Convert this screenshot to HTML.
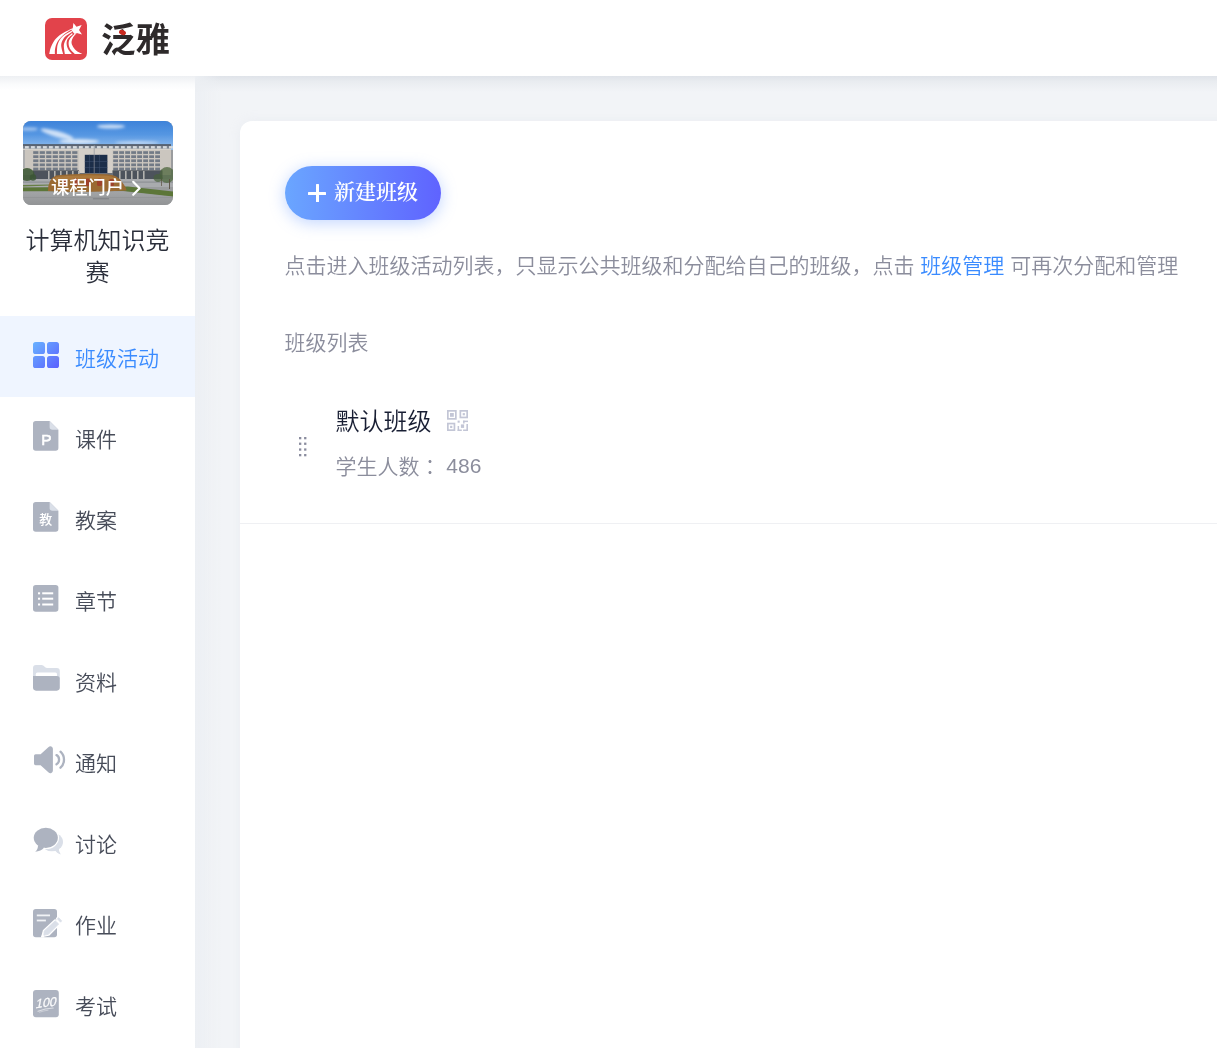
<!DOCTYPE html>
<html lang="zh-CN">
<head>
<meta charset="utf-8">
<title>泛雅 - 班级活动</title>
<style>
html,body{margin:0;padding:0;}
body{width:1217px;height:1048px;overflow:hidden;position:relative;background:#f2f4f7;
  font-family:"Liberation Sans","Noto Sans CJK SC",sans-serif;color:#474c59;font-weight:350;}
.abs{position:absolute;}
#main-shadow{left:195px;top:76px;width:1022px;height:16px;background:linear-gradient(#dfe3e9,#e9ecf0 35%,#f2f4f7);}
#header{left:0;top:0;width:1217px;height:76px;background:#fff;}
#sidebar{left:0;top:76px;width:195px;height:972px;background:#fff;}
#side-shadow{left:0;top:76px;width:195px;height:14px;background:linear-gradient(#eef0f3,#fafbfc 60%,#fff);}
#logo-box{left:45px;top:18px;width:42px;height:42px;border-radius:7px;background:#e2434b;overflow:hidden;}
#logo-text{left:101px;top:15px;font-size:34.5px;line-height:50px;font-weight:700;color:#2e2a2b;letter-spacing:0px;white-space:nowrap;
  font-family:"Liberation Sans","Noto Sans CJK SC",sans-serif;}
#thumb{left:23px;top:121px;width:150px;height:84px;border-radius:8px;overflow:hidden;}
#thumb-text{left:23px;top:175px;width:150px;height:26px;line-height:26px;font-size:18.3px;font-weight:500;color:#fff;white-space:nowrap;}
#course-title{left:22.5px;top:225px;width:150px;text-align:center;font-size:24px;line-height:31.5px;color:#2b2f3b;}
.item{left:0;width:195px;height:81px;}
.item.on{background:#eff5ff;}
.item .ico{position:absolute;left:33px;top:25px;width:26px;height:26px;}
.item .txt{position:absolute;left:75px;top:28px;font-size:21px;line-height:30px;white-space:nowrap;color:#474c59;}
.item.on .txt{color:#3a8bff;}
#panel{left:240px;top:121px;width:1000px;height:940px;background:#fff;border-radius:12px 0 0 0;box-shadow:0 0 12px rgba(200,206,220,0.16);}
#newbtn{left:285px;top:166px;width:156px;height:54px;border-radius:27px;background:linear-gradient(90deg,#6aa6ff,#5f63ff);
  box-shadow:0 3px 16px rgba(100,150,255,0.4);}
#newbtn-txt{left:334px;top:177px;font-size:21px;line-height:30px;color:#fff;white-space:nowrap;
  font-family:"Liberation Serif","Noto Serif CJK SC",serif;font-weight:600;}
#desc{left:284.5px;top:251px;font-size:21px;line-height:30px;color:#8b8d9c;white-space:nowrap;}
#desc a{color:#3a8bff;text-decoration:none;}
#listtitle{left:284.5px;top:328px;font-size:21px;line-height:30px;color:#8b8d9c;white-space:nowrap;}
#cname{left:335.5px;top:405px;font-size:24px;line-height:34px;color:#181e33;white-space:nowrap;}
#ccount{left:335.5px;top:452px;font-size:21px;line-height:30px;color:#8b8d9c;white-space:nowrap;}
#divider{left:240px;top:522.5px;width:977px;height:1.5px;background:#eff0f3;}
</style>
</head>
<body>
<div id="root" style="position:absolute;left:0;top:0;width:1217px;height:1048px;overflow:hidden;will-change:transform;">
<div class="abs" id="main-shadow"></div>
<div class="abs" id="left-shadow" style="left:195px;top:76px;width:26px;height:972px;background:linear-gradient(90deg,#eceff3,rgba(242,244,247,0));"></div>
<div class="abs" id="panel"></div>
<div class="abs" id="sidebar"></div>
<div class="abs" id="side-shadow"></div>
<div class="abs" id="header"></div>

<!-- LOGO -->
<div class="abs" id="logo-box"><svg width="42" height="42" viewBox="0 0 42 42" style="display:block"><g fill="#fff"><path d="M4.2 36 C4.5 35.0 4.8 32.2 5.7 29.8 C6.7 27.4 8.1 24.1 9.9 21.8 C11.7 19.5 13.9 17.6 16.4 15.9 C18.9 14.2 22.9 12.4 24.8 11.4 C26.7 10.4 27.5 10.2 28.0 9.9 L27.2 11.6 C26.7 11.8 25.7 12.0 24.0 13.1 C22.3 14.2 19.0 16.4 17.0 18.3 C15.0 20.2 13.3 22.2 12.2 24.3 C11.0 26.4 10.5 28.9 10.1 30.8 C9.7 32.8 9.9 35.1 9.9 36.0 Z"/><path d="M11.9 36 C12.0 34.5 11.9 29.8 12.5 27.3 C13.1 24.8 14.2 22.7 15.5 20.8 C16.8 18.9 18.6 17.5 20.5 16.2 C22.4 14.9 25.8 13.4 26.8 12.8 L27.0 13.9 C25.9 14.7 22.0 16.8 20.3 18.4 C18.6 20.0 17.6 22.1 16.9 23.8 C16.2 25.5 16.1 26.8 16.3 28.8 C16.5 30.8 17.8 34.8 18.1 36.0 Z"/><path d="M19.85 36 C19.7 34.9 19.0 31.2 18.9 29.3 C18.8 27.4 18.8 26.4 19.4 24.8 C19.9 23.2 20.9 21.3 22.2 19.7 C23.5 18.1 26.4 15.9 27.3 15.1 L27.5 16.4 C26.7 17.1 23.8 19.2 22.8 20.8 C21.8 22.4 21.6 24.1 21.6 25.8 C21.6 27.5 22.0 29.1 22.9 30.8 C23.8 32.5 26.1 35.1 26.8 36.0 Z"/><path d="M29.8 36 C29.0 35.1 26.0 32.6 25.0 30.8 C24.0 29.0 23.6 27.0 23.6 25.3 C23.6 23.6 24.1 22.1 25.1 20.5 C26.1 18.9 29.0 16.6 29.8 15.8 L31.8 14.9 C31.2 15.6 29.2 17.5 28.3 18.9 C27.4 20.3 26.8 21.9 26.6 23.3 C26.4 24.7 26.6 25.8 27.3 27.3 C28.0 28.8 29.1 30.8 30.8 32.3 C32.5 33.8 36.1 35.4 37.2 36.0 Z"/><path d="M28.4 5 L31.5 8.7 L36.7 6.9 L34 11.9 L37 16.4 L31.8 14.9 L29.6 16 L26.6 12.6 L27.8 9.9 Z"/></g></svg></div>
<div class="abs" id="logo-text">泛雅</div>
<div class="abs" style="left:118.6px;top:29.6px;width:7px;height:5px;background:#c9291f;border-radius:60% 50% 60% 40%;transform:rotate(28deg);"></div>

<!-- THUMB -->
<div class="abs" id="thumb"><svg width="150" height="84" viewBox="0 0 150 84" style="display:block">
<defs>
<linearGradient id="sky" x1="0" y1="0" x2="0" y2="1"><stop offset="0" stop-color="#3a80d8"/><stop offset="0.5" stop-color="#5596e2"/><stop offset="1" stop-color="#97c1ee"/></linearGradient>
<linearGradient id="gnd" x1="0" y1="0" x2="0" y2="1"><stop offset="0" stop-color="#a3a5a7"/><stop offset="1" stop-color="#8f9193"/></linearGradient>
<filter id="b1" x="-10%" y="-10%" width="120%" height="120%"><feGaussianBlur stdDeviation="0.5"/></filter>
<filter id="b3" x="-30%" y="-80%" width="160%" height="260%"><feGaussianBlur stdDeviation="1.5"/></filter>
</defs>
<rect width="150" height="84" fill="#9a9c9e"/>
<g filter="url(#b1)">
<rect x="-2" y="-2" width="154" height="31" fill="url(#sky)"/>
<g filter="url(#b3)" fill="#eef4fc">
<ellipse cx="88" cy="5.5" rx="14" ry="2" opacity="0.8"/>
<ellipse cx="34" cy="13" rx="17" ry="3" opacity="0.8" transform="rotate(16 34 13)"/>
<ellipse cx="56" cy="20.5" rx="20" ry="2.2" opacity="0.85"/>
<ellipse cx="6" cy="8" rx="9" ry="1.6" opacity="0.6"/>
<ellipse cx="114" cy="21.8" rx="22" ry="1.5" opacity="0.7"/>
</g>
<rect x="0" y="24" width="148" height="30" fill="#cbc6bf"/>
<rect x="0" y="23.2" width="148" height="1.7" fill="#4d5562"/>
<rect x="0" y="24.9" width="148" height="3" fill="#7a838f"/>
<rect x="2" y="25.1" width="3.8" height="2.4" fill="#d5dade"/>
<rect x="8" y="25.1" width="3.8" height="2.4" fill="#d5dade"/>
<rect x="14" y="25.1" width="3.8" height="2.4" fill="#d5dade"/>
<rect x="20" y="25.1" width="3.8" height="2.4" fill="#d5dade"/>
<rect x="26" y="25.1" width="3.8" height="2.4" fill="#d5dade"/>
<rect x="32" y="25.1" width="3.8" height="2.4" fill="#d5dade"/>
<rect x="38" y="25.1" width="3.8" height="2.4" fill="#d5dade"/>
<rect x="44" y="25.1" width="3.8" height="2.4" fill="#d5dade"/>
<rect x="50" y="25.1" width="3.8" height="2.4" fill="#d5dade"/>
<rect x="56" y="25.1" width="3.8" height="2.4" fill="#d5dade"/>
<rect x="62" y="25.1" width="3.8" height="2.4" fill="#d5dade"/>
<rect x="68" y="25.1" width="3.8" height="2.4" fill="#d5dade"/>
<rect x="74" y="25.1" width="3.8" height="2.4" fill="#d5dade"/>
<rect x="80" y="25.1" width="3.8" height="2.4" fill="#d5dade"/>
<rect x="86" y="25.1" width="3.8" height="2.4" fill="#d5dade"/>
<rect x="92" y="25.1" width="3.8" height="2.4" fill="#d5dade"/>
<rect x="98" y="25.1" width="3.8" height="2.4" fill="#d5dade"/>
<rect x="104" y="25.1" width="3.8" height="2.4" fill="#d5dade"/>
<rect x="110" y="25.1" width="3.8" height="2.4" fill="#d5dade"/>
<rect x="116" y="25.1" width="3.8" height="2.4" fill="#d5dade"/>
<rect x="122" y="25.1" width="3.8" height="2.4" fill="#d5dade"/>
<rect x="128" y="25.1" width="3.8" height="2.4" fill="#d5dade"/>
<rect x="134" y="25.1" width="3.8" height="2.4" fill="#d5dade"/>
<rect x="140" y="25.1" width="3.8" height="2.4" fill="#d5dade"/>
<rect x="146" y="25.1" width="3.8" height="2.4" fill="#d5dade"/>
<rect x="0" y="27.7" width="148" height="0.8" fill="#e2ded8"/>
<rect x="10.2" y="30.2" width="5.2" height="2.7" fill="#727a86"/>
<rect x="16.7" y="30.2" width="5.2" height="2.7" fill="#727a86"/>
<rect x="23.2" y="30.2" width="5.2" height="2.7" fill="#727a86"/>
<rect x="29.7" y="30.2" width="5.2" height="2.7" fill="#727a86"/>
<rect x="36.2" y="30.2" width="5.2" height="2.7" fill="#727a86"/>
<rect x="42.7" y="30.2" width="5.2" height="2.7" fill="#727a86"/>
<rect x="49.2" y="30.2" width="5.2" height="2.7" fill="#727a86"/>
<rect x="10.2" y="34.3" width="5.2" height="2.7" fill="#727a86"/>
<rect x="16.7" y="34.3" width="5.2" height="2.7" fill="#727a86"/>
<rect x="23.2" y="34.3" width="5.2" height="2.7" fill="#727a86"/>
<rect x="29.7" y="34.3" width="5.2" height="2.7" fill="#727a86"/>
<rect x="36.2" y="34.3" width="5.2" height="2.7" fill="#727a86"/>
<rect x="42.7" y="34.3" width="5.2" height="2.7" fill="#727a86"/>
<rect x="49.2" y="34.3" width="5.2" height="2.7" fill="#727a86"/>
<rect x="10.2" y="38.4" width="5.2" height="2.7" fill="#727a86"/>
<rect x="16.7" y="38.4" width="5.2" height="2.7" fill="#727a86"/>
<rect x="23.2" y="38.4" width="5.2" height="2.7" fill="#727a86"/>
<rect x="29.7" y="38.4" width="5.2" height="2.7" fill="#727a86"/>
<rect x="36.2" y="38.4" width="5.2" height="2.7" fill="#727a86"/>
<rect x="42.7" y="38.4" width="5.2" height="2.7" fill="#727a86"/>
<rect x="49.2" y="38.4" width="5.2" height="2.7" fill="#727a86"/>
<rect x="10.2" y="42.5" width="5.2" height="2.7" fill="#727a86"/>
<rect x="16.7" y="42.5" width="5.2" height="2.7" fill="#727a86"/>
<rect x="23.2" y="42.5" width="5.2" height="2.7" fill="#727a86"/>
<rect x="29.7" y="42.5" width="5.2" height="2.7" fill="#727a86"/>
<rect x="36.2" y="42.5" width="5.2" height="2.7" fill="#727a86"/>
<rect x="42.7" y="42.5" width="5.2" height="2.7" fill="#727a86"/>
<rect x="49.2" y="42.5" width="5.2" height="2.7" fill="#727a86"/>
<rect x="10.2" y="46.6" width="5.2" height="2.7" fill="#727a86"/>
<rect x="16.7" y="46.6" width="5.2" height="2.7" fill="#727a86"/>
<rect x="23.2" y="46.6" width="5.2" height="2.7" fill="#727a86"/>
<rect x="29.7" y="46.6" width="5.2" height="2.7" fill="#727a86"/>
<rect x="36.2" y="46.6" width="5.2" height="2.7" fill="#727a86"/>
<rect x="42.7" y="46.6" width="5.2" height="2.7" fill="#727a86"/>
<rect x="49.2" y="46.6" width="5.2" height="2.7" fill="#727a86"/>
<rect x="90.2" y="30.2" width="4.8" height="2.7" fill="#727a86"/>
<rect x="96.2" y="30.2" width="4.8" height="2.7" fill="#727a86"/>
<rect x="102.2" y="30.2" width="4.8" height="2.7" fill="#727a86"/>
<rect x="108.2" y="30.2" width="4.8" height="2.7" fill="#727a86"/>
<rect x="114.2" y="30.2" width="4.8" height="2.7" fill="#727a86"/>
<rect x="120.2" y="30.2" width="4.8" height="2.7" fill="#727a86"/>
<rect x="126.2" y="30.2" width="4.8" height="2.7" fill="#727a86"/>
<rect x="132.2" y="30.2" width="4.8" height="2.7" fill="#727a86"/>
<rect x="90.2" y="34.3" width="4.8" height="2.7" fill="#727a86"/>
<rect x="96.2" y="34.3" width="4.8" height="2.7" fill="#727a86"/>
<rect x="102.2" y="34.3" width="4.8" height="2.7" fill="#727a86"/>
<rect x="108.2" y="34.3" width="4.8" height="2.7" fill="#727a86"/>
<rect x="114.2" y="34.3" width="4.8" height="2.7" fill="#727a86"/>
<rect x="120.2" y="34.3" width="4.8" height="2.7" fill="#727a86"/>
<rect x="126.2" y="34.3" width="4.8" height="2.7" fill="#727a86"/>
<rect x="132.2" y="34.3" width="4.8" height="2.7" fill="#727a86"/>
<rect x="90.2" y="38.4" width="4.8" height="2.7" fill="#727a86"/>
<rect x="96.2" y="38.4" width="4.8" height="2.7" fill="#727a86"/>
<rect x="102.2" y="38.4" width="4.8" height="2.7" fill="#727a86"/>
<rect x="108.2" y="38.4" width="4.8" height="2.7" fill="#727a86"/>
<rect x="114.2" y="38.4" width="4.8" height="2.7" fill="#727a86"/>
<rect x="120.2" y="38.4" width="4.8" height="2.7" fill="#727a86"/>
<rect x="126.2" y="38.4" width="4.8" height="2.7" fill="#727a86"/>
<rect x="132.2" y="38.4" width="4.8" height="2.7" fill="#727a86"/>
<rect x="90.2" y="42.5" width="4.8" height="2.7" fill="#727a86"/>
<rect x="96.2" y="42.5" width="4.8" height="2.7" fill="#727a86"/>
<rect x="102.2" y="42.5" width="4.8" height="2.7" fill="#727a86"/>
<rect x="108.2" y="42.5" width="4.8" height="2.7" fill="#727a86"/>
<rect x="114.2" y="42.5" width="4.8" height="2.7" fill="#727a86"/>
<rect x="120.2" y="42.5" width="4.8" height="2.7" fill="#727a86"/>
<rect x="126.2" y="42.5" width="4.8" height="2.7" fill="#727a86"/>
<rect x="132.2" y="42.5" width="4.8" height="2.7" fill="#727a86"/>
<rect x="90.2" y="46.6" width="4.8" height="2.7" fill="#727a86"/>
<rect x="96.2" y="46.6" width="4.8" height="2.7" fill="#727a86"/>
<rect x="102.2" y="46.6" width="4.8" height="2.7" fill="#727a86"/>
<rect x="108.2" y="46.6" width="4.8" height="2.7" fill="#727a86"/>
<rect x="114.2" y="46.6" width="4.8" height="2.7" fill="#727a86"/>
<rect x="120.2" y="46.6" width="4.8" height="2.7" fill="#727a86"/>
<rect x="126.2" y="46.6" width="4.8" height="2.7" fill="#727a86"/>
<rect x="132.2" y="46.6" width="4.8" height="2.7" fill="#727a86"/>
<rect x="0.5" y="29" width="1" height="18" fill="#8c929b"/>
<rect x="56" y="27.5" width="33.5" height="27" fill="#d4cfc8"/>
<rect x="61.8" y="33.8" width="22.6" height="20" fill="#1f2d48"/>
<rect x="61.8" y="40" width="22.6" height="0.5" fill="#3e5273"/>
<rect x="61.8" y="46" width="22.6" height="0.5" fill="#3e5273"/>
<rect x="70.8" y="24" width="0.7" height="30" fill="#8f959c"/>
<rect x="76.5" y="33.8" width="0.5" height="20" fill="#3e5273"/>
<rect x="66.5" y="33.8" width="0.5" height="20" fill="#3e5273"/>
<rect x="10" y="49.3" width="46" height="9" fill="#4d535b"/>
<rect x="89.5" y="49.3" width="50" height="9" fill="#4d535b"/>
<rect x="56" y="52" width="34" height="6.5" fill="#6c7078"/>
<rect x="25" y="50" width="1.6" height="8.5" fill="#b3b2af"/>
<rect x="31" y="50" width="1.6" height="8.5" fill="#b3b2af"/>
<rect x="37" y="50" width="1.6" height="8.5" fill="#b3b2af"/>
<rect x="43" y="50" width="1.6" height="8.5" fill="#b3b2af"/>
<rect x="49" y="50" width="1.6" height="8.5" fill="#b3b2af"/>
<rect x="55" y="50" width="1.6" height="8.5" fill="#b3b2af"/>
<rect x="96" y="50" width="1.6" height="8.5" fill="#b3b2af"/>
<rect x="102" y="50" width="1.6" height="8.5" fill="#b3b2af"/>
<rect x="108" y="50" width="1.6" height="8.5" fill="#b3b2af"/>
<rect x="114" y="50" width="1.6" height="8.5" fill="#b3b2af"/>
<rect x="120" y="50" width="1.6" height="8.5" fill="#b3b2af"/>
<rect x="0" y="58" width="150" height="8" fill="#a9abae"/>
<rect x="0" y="60.5" width="150" height="1.2" fill="#8d9194"/>
<ellipse cx="4" cy="53.5" rx="7.5" ry="6.5" fill="#405a37" opacity="0.9"/>
<ellipse cx="10" cy="56.5" rx="3.2" ry="3.2" fill="#3b5535" opacity="0.85"/>
<ellipse cx="144" cy="54" rx="7.5" ry="8" fill="#4d663c" opacity="0.75"/>
<ellipse cx="135" cy="57" rx="4.5" ry="4" fill="#48613a" opacity="0.7"/>
<rect x="146" y="58" width="0.9" height="10" fill="#5a5040"/>
<rect x="138" y="58" width="0.7" height="7" fill="#5a5040"/>
<path d="M0 66.5 L105 65.5 L150 70.5 L150 75.5 L100 70 L0 70.5 Z" fill="#5c7638"/>
<path d="M0 64 L28 63.4 L28 64.6 L0 65.5 Z" fill="#687f45"/>
<path d="M0 70.5 L100 70.5 L150 76 L150 86 L0 86 Z" fill="url(#gnd)"/>
<rect x="0" y="76.5" width="150" height="0.5" fill="#84878a" opacity="0.7"/>
<rect x="70" y="77" width="16" height="1.4" fill="#7f8285" opacity="0.8"/>
<path d="M25 70 Q25 58 33 54.5 Q55 52 84 53.2 Q95 54 99 61 Q103 66 103.5 69.5 Q60 72 25 70 Z" fill="#9a6a33"/>
<path d="M33 56 Q55 53.5 84 54.8 Q92 55.5 96 60 Q60 57 30 60 Z" fill="#ac7a3c"/>
<g fill="#a0362a" opacity="0.75"><rect x="39" y="58" width="5" height="7" rx="1.5"/><rect x="50" y="57.5" width="5" height="7.5" rx="1.5"/><rect x="62" y="57.5" width="5" height="7.5" rx="1.5"/><rect x="74" y="57.5" width="5" height="7.5" rx="1.5"/><rect x="86" y="58" width="5" height="7" rx="1.5"/></g>
</g>
</svg></div>
<div class="abs" id="thumb-text"><span style="position:absolute;left:28px;">课程门户</span></div>
<div class="abs" id="course-title">计算机知识竞赛</div>

<!-- MENU -->
<div class="abs item on" style="top:316px"><div class="ico" id="ico1" style="left:33px;top:25.6px;width:26px;height:26px;"><svg width="26" height="26" viewBox="0 0 26 26" style="display:block"><defs><linearGradient id="gg" x1="0" y1="0" x2="1" y2="1"><stop offset="0" stop-color="#68b2ff"/><stop offset="1" stop-color="#5b60ff"/></linearGradient></defs><path fill="url(#gg)" d="M2.6 0H9.4A2.6 2.6 0 0 1 12 2.6V9.4A2.6 2.6 0 0 1 9.4 12H2.6A2.6 2.6 0 0 1 0 9.4V2.6A2.6 2.6 0 0 1 2.6 0ZM16.6 0H23.4A2.6 2.6 0 0 1 26 2.6V9.4A2.6 2.6 0 0 1 23.4 12H16.6A2.6 2.6 0 0 1 14 9.4V2.6A2.6 2.6 0 0 1 16.6 0ZM2.6 14H9.4A2.6 2.6 0 0 1 12 16.6V23.4A2.6 2.6 0 0 1 9.4 26H2.6A2.6 2.6 0 0 1 0 23.4V16.6A2.6 2.6 0 0 1 2.6 14ZM16.6 14H23.4A2.6 2.6 0 0 1 26 16.6V23.4A2.6 2.6 0 0 1 23.4 26H16.6A2.6 2.6 0 0 1 14 23.4V16.6A2.6 2.6 0 0 1 16.6 14Z"/></svg></div><div class="txt">班级活动</div></div>
<div class="abs item" style="top:397px"><div class="ico" id="ico2" style="left:33px;top:24.1px;width:26px;height:30px;"><svg width="26" height="30" viewBox="0 0 26 30" style="display:block"><path fill="#adb3c0" d="M2.8 0H16.6L25.4 8.8V27A2.8 2.8 0 0 1 22.6 29.8H2.8A2.8 2.8 0 0 1 0 27V2.8A2.8 2.8 0 0 1 2.8 0Z"/><path fill="#dadfe8" d="M16.6 0L25.4 8.8H19.4A2.8 2.8 0 0 1 16.6 6Z"/><text x="13.3" y="23.6" text-anchor="middle" style="font-family:'Liberation Sans',sans-serif;font-size:15.5px;" fill="#fff" stroke="#fff" stroke-width="0.55">P</text></svg></div><div class="txt">课件</div></div>
<div class="abs item" style="top:478px"><div class="ico" id="ico3" style="left:33px;top:24.1px;width:26px;height:30px;"><svg width="26" height="30" viewBox="0 0 26 30" style="display:block"><path fill="#adb3c0" d="M2.8 0H16.6L25.4 8.8V27A2.8 2.8 0 0 1 22.6 29.8H2.8A2.8 2.8 0 0 1 0 27V2.8A2.8 2.8 0 0 1 2.8 0Z"/><path fill="#dadfe8" d="M16.6 0L25.4 8.8H19.4A2.8 2.8 0 0 1 16.6 6Z"/><text x="12.8" y="21.5" text-anchor="middle" font-family="Noto Sans CJK SC, sans-serif" font-weight="500" font-size="13" fill="#fff">教</text></svg></div><div class="txt">教案</div></div>
<div class="abs item" style="top:559px"><div class="ico" id="ico4" style="left:33px;top:25.8px;width:26px;height:27px;"><svg width="26" height="27" viewBox="0 0 26 27" style="display:block"><rect width="25.4" height="26.8" rx="2.8" fill="#adb3c0"/><g fill="#fff"><rect x="5" y="7.3" width="2.1" height="2"/><rect x="9.2" y="7.3" width="11" height="2"/><rect x="5" y="12.7" width="2.1" height="2"/><rect x="9.2" y="12.7" width="11" height="2"/><rect x="5" y="18.5" width="2.1" height="2"/><rect x="9.2" y="18.5" width="11" height="2"/></g></svg></div><div class="txt">章节</div></div>
<div class="abs item" style="top:640px"><div class="ico" id="ico5" style="left:33px;top:25.25px;width:27px;height:26px;"><svg width="27" height="26" viewBox="0 0 27 26" style="display:block"><path fill="#dadfe8" d="M0 3Q0 0 3 0H8.6Q10.4 0 11.4 1.6Q12.3 3 14 3H23.8Q26.8 3 26.8 6V14H0Z"/><rect x="2.8" y="7.6" width="21.2" height="5" rx="1.6" fill="#fff"/><path fill="#adb3c0" d="M0 10.9H23.8Q26.8 10.9 26.8 13.9V22.6Q26.8 25.65 23.8 25.65H3Q0 25.65 0 22.6Z"/></svg></div><div class="txt">资料</div></div>
<div class="abs item" style="top:721px"><div class="ico" id="ico6" style="left:33px;top:24.4px;width:34px;height:30px;"><svg width="34" height="30" viewBox="0 0 34 30" style="display:block"><path fill="#adb3c0" d="M2.6 9.2H7.6L15.6 1.9A2.6 2.6 0 0 1 19.9 3.9V25.5A2.6 2.6 0 0 1 15.6 27.5L7.6 20.2H2.6Q1 20.2 1 18.6V10.8Q1 9.2 2.6 9.2Z"/><path fill="none" stroke="#adb3c0" stroke-width="2.3" stroke-linecap="round" d="M23.5 10.1A5.4 5.4 0 0 1 23.5 19.3M27.5 6.7A10.9 10.9 0 0 1 27.5 22.7"/></svg></div><div class="txt">通知</div></div>
<div class="abs item" style="top:802px"><div class="ico" id="ico7" style="left:33px;top:25px;width:32px;height:30px;"><svg width="32" height="30" viewBox="0 0 32 30" style="display:block"><ellipse cx="18.8" cy="14.9" rx="11.2" ry="9.3" fill="#dadfe8"/><path fill="#dadfe8" d="M21.5 22.6Q23.8 26.6 27.8 27.6Q25.3 24.6 25.9 21Z"/><g stroke="#fff" stroke-width="2.4" fill="#fff"><ellipse cx="12.8" cy="10.85" rx="12.05" ry="10.05"/></g><ellipse cx="12.8" cy="10.85" rx="12.05" ry="10.05" fill="#adb3c0"/><path fill="#adb3c0" d="M5 18Q5.2 22.4 2.2 24.7Q8 24.4 11.2 20.6Z"/></svg></div><div class="txt">讨论</div></div>
<div class="abs item" style="top:883px"><div class="ico" id="ico8" style="left:33.1px;top:25.6px;width:32px;height:30px;"><svg width="32" height="30" viewBox="0 0 32 30" style="display:block"><rect width="24" height="28.3" rx="2.8" fill="#adb3c0"/><rect x="3.8" y="5.5" width="13.2" height="1.8" fill="#f1f3f6"/><rect x="3.8" y="10.6" width="9.1" height="1.8" fill="#f1f3f6"/><g stroke="#fff" stroke-width="2.5" stroke-linejoin="round" fill="#fff"><path d="M22.2 11.5L26 15L15.6 25.5L10.6 26.6L10.9 21.9Z"/><path d="M24.1 9.7L25.7 8.3L29.1 11.9L27.5 13.7Z"/></g><path fill="#fff" d="M10.2 21.4L7.7 28.6L11.6 28.6L10.4 26.4Z"/><path fill="#dadfe8" stroke="#dadfe8" stroke-width="0.8" stroke-linejoin="round" d="M22.2 11.8L25.7 15L15.4 25.3L10.9 26.3L11.2 22.1Z"/><path fill="#dadfe8" stroke="#dadfe8" stroke-width="0.8" stroke-linejoin="round" d="M24.4 9.8L25.7 8.7L28.7 11.9L27.5 13.2Z"/></svg></div><div class="txt">作业</div></div>
<div class="abs item" style="top:964px"><div class="ico" id="ico9" style="left:33.1px;top:25.6px;width:27px;height:28px;"><svg width="27" height="28" viewBox="0 0 27 28" style="display:block"><rect width="25.8" height="27.3" rx="3" fill="#adb3c0"/><text x="0" y="0" text-anchor="middle" style="font-family:'Liberation Sans',sans-serif;font-size:12.5px;" fill="#fff" fill-opacity="0.92" stroke="#fff" stroke-width="0.3" stroke-opacity="0.9" transform="translate(12.6 16.9) rotate(-7) skewX(-18)">100</text><path d="M5 21.2Q12 18.6 20.2 18" stroke="#fff" stroke-opacity="0.6" stroke-width="1.1" fill="none" stroke-linecap="round"/><path d="M6.5 22.2Q11 20.6 15 20.2" stroke="#fff" stroke-opacity="0.45" stroke-width="0.8" fill="none" stroke-linecap="round"/></svg></div><div class="txt">考试</div></div>

<!-- CONTENT -->
<div class="abs" id="newbtn"></div>
<div class="abs" id="newbtn-txt">新建班级</div>
<div class="abs" id="desc">点击进入班级活动列表，只显示公共班级和分配给自己的班级，点击 <a>班级管理</a> 可再次分配和管理</div>
<div class="abs" id="listtitle">班级列表</div>
<div class="abs" id="cname">默认班级</div>
<div class="abs" id="ccount">学生人数<span lang="zh-TW" style="font-family:'Liberation Sans','Noto Sans CJK TC',sans-serif">：</span> <span style="position:relative;top:-1px">486</span></div>
<div class="abs" id="divider"></div>
<div class="abs" style="left:308px;top:191.5px;width:18px;height:3px;background:#fff;border-radius:0.5px;"></div>
<div class="abs" style="left:315.5px;top:184px;width:3px;height:18px;background:#fff;border-radius:0.5px;"></div>
<div class="abs" id="qr" style="left:447px;top:410px;width:21px;height:21px;">
<svg width="21" height="21" viewBox="0 0 21 21" style="display:block"><g fill="none" stroke="#c3c6d6" stroke-width="1.7"><rect x="0.85" y="0.85" width="8" height="8"/><rect x="13.35" y="0.85" width="6.8" height="6.6"/><rect x="0.85" y="13.55" width="6.6" height="6.6"/></g>
<g fill="#c3c6d6"><rect x="3" y="3" width="3.8" height="3.8"/><rect x="15.7" y="3.1" width="2.2" height="2.2"/><rect x="3.1" y="15.8" width="2.2" height="2.2"/><rect x="10.6" y="10.6" width="2.1" height="2.1"/><rect x="16.1" y="10.6" width="4.9" height="1.5"/><rect x="16.1" y="10.6" width="1.5" height="2.9"/><rect x="19.4" y="14" width="1.6" height="7"/><rect x="16.1" y="19.5" width="4.9" height="1.5"/><rect x="10.6" y="16" width="1.5" height="5"/><rect x="10.6" y="19.5" width="4.2" height="1.5"/><rect x="13.9" y="14.4" width="3.2" height="3.5"/></g></svg></div>
<div class="abs" id="drag" style="left:299px;top:437.3px;width:8px;height:20px;">
<svg width="8" height="20" viewBox="0 0 8 20" style="display:block"><g fill="#8a8c9e"><rect x="0" y="0" width="2.3" height="2.3"/><rect x="5.1" y="0" width="2.3" height="2.3"/><rect x="0" y="5.6" width="2.3" height="2.3"/><rect x="5.1" y="5.6" width="2.3" height="2.3"/><rect x="0" y="11.4" width="2.3" height="2.3"/><rect x="5.1" y="11.4" width="2.3" height="2.3"/><rect x="0" y="17" width="2.3" height="2.3"/><rect x="5.1" y="17" width="2.3" height="2.3"/></g></svg></div>
<div class="abs" style="left:131px;top:180px;width:11px;height:17px;"><svg width="11" height="17" viewBox="0 0 11 17" style="display:block"><path d="M2.2 1.8L8.6 8.3L2.2 14.8" fill="none" stroke="#fff" stroke-width="2.2" stroke-linecap="round" stroke-linejoin="round"/></svg></div>

</div>
</body>
</html>
